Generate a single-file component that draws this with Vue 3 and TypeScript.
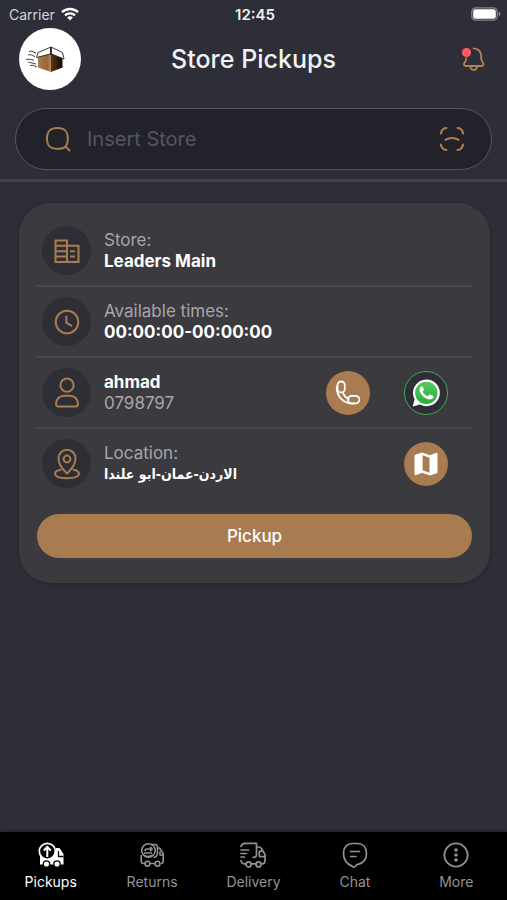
<script setup lang="ts">
import { ref } from 'vue'

interface Tab {
  id: string
  label: string
}

const tabs: Tab[] = [
  { id: 'pickups', label: 'Pickups' },
  { id: 'returns', label: 'Returns' },
  { id: 'delivery', label: 'Delivery' },
  { id: 'chat', label: 'Chat' },
  { id: 'more', label: 'More' },
]

const activeTab = ref('pickups')
const query = ref('')

const store = {
  name: 'Leaders Main',
  times: '00:00:00-00:00:00',
  contact: 'ahmad',
  phone: '0798797',
  location: 'الاردن-عمان-ابو علندا',
}
</script>

<template>
  <div class="screen">
    <div class="status">
      <div class="carrier">
        <span>Carrier</span>
        <svg class="wifi" viewBox="0 0 18 14" aria-hidden="true">
          <g fill="none" stroke="currentColor" stroke-width="2.4">
            <path d="M1 5.2a11.5 11.5 0 0 1 16 0" />
            <path d="M4 8.400a7.2 7.2 0 0 1 10 0" />
          </g>
          <path d="M9 13.600 6.100 10.600a4.2 4.2 0 0 1 5.800 0z" fill="currentColor" />
        </svg>
      </div>
      <span class="clock">12:45</span>
      <svg class="battery" viewBox="0 0 30 14" aria-hidden="true">
        <rect x=".8" y=".8" width="25.4" height="12.4" rx="4" fill="none" stroke="#85858b" stroke-width="1.3" />
        <rect x="2.2" y="2.2" width="22.6" height="9.6" rx="2.4" fill="#fff" />
        <path d="M27.6 4.8q2 .8 2 2.2t-2 2.2z" fill="#85858b" />
      </svg>
    </div>

    <header class="header">
      <div class="logo">
        <svg viewBox="0 0 62 62" aria-hidden="true">
          <defs>
            <linearGradient id="box-left" x1="0" x2="1">
              <stop offset="0" stop-color="#ad7c4b" />
              <stop offset=".7" stop-color="#96663a" />
              <stop offset="1" stop-color="#b98b5c" />
            </linearGradient>
            <linearGradient id="box-right" x1="0" x2="1">
              <stop offset="0" stop-color="#5b3419" />
              <stop offset="1" stop-color="#120b0a" />
            </linearGradient>
          </defs>
          <path d="M19 28.500 32 25.500V44L19 39.500z" fill="url(#box-left)" />
          <path d="M32 25.500 43.500 28.500V39.500L32 44z" fill="url(#box-right)" />
          <path d="M19 24.500 32 19V25.800L17.500 29.500z" fill="#fff" stroke="#29211f" stroke-width=".9" />
          <path d="M32 19 43.500 24.500 45 31 32 25.800z" fill="#fff" stroke="#29211f" stroke-width=".9" />
          <path d="M32 19v8" stroke="#29211f" stroke-width="1.600" />
          <path d="M10 23.500l3-.3 4 2M9 27l3-.3 4 2M7 31.500l3-.3 5 1M9 34l8 2M11 37.500l3-.3 4 2" fill="none" stroke="#333" stroke-width=".9" />
        </svg>
      </div>
      <h1>Store Pickups</h1>
      <button class="bell" type="button" aria-label="Notifications">
        <svg viewBox="0 0 26 28" aria-hidden="true">
          <g fill="none" stroke="#b08350" stroke-width="1.800" stroke-linecap="round" stroke-linejoin="round">
            <path d="M13.500 3.300c4.500.1 7.700 3.300 7.700 7.500v3.300c0 1.700 2.200 3.600 2.200 5.200 0 1-.8 1.700-1.900 1.700H6c-1.200 0-2-.7-2-1.700 0-1.600 2.200-3.400 2.200-5.200v-1" />
            <path d="M10 21.200c.5 2.400 1.800 3.700 3.700 3.700s3.200-1.300 3.700-3.700" />
          </g>
          <circle cx="6.500" cy="7.500" r="4.600" fill="#fc5a62" />
        </svg>
      </button>
    </header>

    <div class="search-area">
      <form class="search" role="search" @submit.prevent>
        <svg class="glass" viewBox="0 0 26 26" aria-hidden="true">
          <g fill="none" stroke="#a97d4e" stroke-width="2" stroke-linecap="round">
            <path d="M12.500 2C20 2 22.800 5 22.800 12.500S20 22.800 12.500 22.800 2 20 2 12.500 5 2 12.500 2z" />
            <path d="M20.500 20.500 24.500 24.500" />
          </g>
        </svg>
        <input v-model="query" type="text" placeholder="Insert Store" aria-label="Insert Store" />
        <button class="scan" type="button" aria-label="Scan">
          <svg viewBox="0 0 26 26" aria-hidden="true">
            <g fill="none" stroke="#a97d4e" stroke-width="2.200" stroke-linecap="round">
              <path d="M2 7.500C2.300 4 4 2.300 7.500 2M18.500 2C22 2.300 23.700 4 24 7.500M24 18.500c-.3 3.500-2 5.200-5.500 5.500M7.500 24C4 23.700 2.300 22 2 18.500" />
              <path d="M6.500 13.800c4-2.200 9-2.200 13 0" />
            </g>
          </svg>
        </button>
      </form>
    </div>

    <main class="content">
      <section class="card">
        <div class="row">
          <span class="badge">
            <svg viewBox="0 0 28 28" fill="none" stroke="#a97d4e" stroke-width="2" aria-hidden="true">
              <path d="M2.500 3.500h11.500V25H2.500zM14 8.800h11.500V25H14" />
              <path d="M2.500 8.800H14M2.500 14.200H14M2.500 19.600H14" />
              <path d="M17 14.200h5M17 19.600h5" />
            </svg>
          </span>
          <div class="text">
            <span class="label">Store:</span>
            <span class="value">{{ store.name }}</span>
          </div>
        </div>

        <div class="row">
          <span class="badge">
            <svg viewBox="0 0 28 28" fill="none" stroke="#a97d4e" stroke-width="2" stroke-linecap="round" stroke-linejoin="round" aria-hidden="true">
              <circle cx="14" cy="14" r="11.300" />
              <path d="M13.300 8.500v6.200l5 3" />
            </svg>
          </span>
          <div class="text">
            <span class="label">Available times:</span>
            <span class="value">{{ store.times }}</span>
          </div>
        </div>

        <div class="row">
          <span class="badge">
            <svg class="tall" viewBox="0 0 28 32" fill="none" stroke="#a97d4e" stroke-width="2" stroke-linejoin="round" aria-hidden="true">
              <circle cx="14" cy="8.200" r="6.600" />
              <path d="M3 27c0-5 3.500-8.300 8-8.300h6c4.500 0 8 3.300 8 8.300 0 1.500-1 2.600-2.500 2.600h-17C4 29.600 3 28.500 3 27z" />
            </svg>
          </span>
          <div class="text">
            <span class="value">{{ store.contact }}</span>
            <span class="label">{{ store.phone }}</span>
          </div>
          <div class="actions">
            <a class="round" :href="'tel:' + store.phone" aria-label="Call">
              <svg viewBox="0 0 28 28" fill="none" stroke="#fff" stroke-width="1.800" stroke-linecap="round" aria-hidden="true">
                <rect x="3.500" y="2.500" width="7.300" height="11" rx="3.600" />
                <rect x="14" y="16.800" width="11.300" height="7.600" rx="3.700" />
                <path d="M2.700 8C2.700 18 9.500 24.900 20 24.600M8.800 13.300c.9 3 3 5.500 5.900 6.700" />
              </svg>
            </a>
            <a class="round whatsapp" href="#whatsapp" aria-label="WhatsApp">
              <svg viewBox="0 0 28 28" aria-hidden="true">
                <defs>
                  <linearGradient id="wa" x1="0" y1="0" x2="0" y2="1">
                    <stop offset="0" stop-color="#55cb62" />
                    <stop offset="1" stop-color="#28ad3a" />
                  </linearGradient>
                </defs>
                <path d="M14.300.6A13.300 13.300 0 0 0 2.600 20.200L.6 27.500l7.600-1.900A13.300 13.300 0 1 0 14.300.6z" fill="#fff" />
                <circle cx="14.300" cy="13.900" r="11.200" fill="url(#wa)" />
                <path d="M9.700 7.200c-1 .4-2.200 1.700-2.200 3.400 0 4.500 5.700 9.900 10.400 9.900 1.800 0 3.400-1.100 3.600-2.500.1-.7 0-1-.5-1.200l-2.800-1.300c-.4-.2-.7-.1-1 .3l-1.100 1.300c-.3.300-.5.300-.9.100-2-1-3.500-2.300-4.500-4.100-.2-.4-.1-.6.200-.9l.8-1c.2-.3.200-.6.100-.9l-1.200-2.700c-.2-.4-.5-.5-.9-.4z" fill="#fff" />
              </svg>
            </a>
          </div>
        </div>

        <div class="row">
          <span class="badge">
            <svg class="tall" viewBox="0 0 28 32" fill="none" stroke="#a97d4e" stroke-width="2" stroke-linecap="round" aria-hidden="true">
              <path d="M14 25.500C8.500 20.500 5.500 15.500 5.500 10.500a8.500 8.800 0 0 1 17 0C22.500 15.500 19.500 20.500 14 25.500z" />
              <circle cx="14" cy="11" r="3.400" />
              <path d="M7.500 21.800C4 22.600 2 24 2 25.800c0 2.700 4.800 4.400 12 4.400s12-1.700 12-4.400c0-1.800-2-3.200-5.500-4" />
            </svg>
          </span>
          <div class="text">
            <span class="label">Location:</span>
            <span class="value arabic" lang="ar" dir="rtl">{{ store.location }}</span>
          </div>
          <div class="actions">
            <button class="round" type="button" aria-label="Open map">
              <svg viewBox="0 0 28 28" aria-hidden="true">
                <path d="M10 2.500 3.300 4.800c-.5.200-.8.500-.8 1V24.300c0 .8.500 1.100 1.200.9L10 22.800l8 2.700 6.700-2.300c.5-.2.800-.5.800-1V3.700c0-.8-.5-1.100-1.200-.9L18 5.300zM10.600 5.300 17.500 7.700V22.700L10.600 20.300z" fill="#fff" fill-rule="evenodd" />
              </svg>
            </button>
          </div>
        </div>

        <button class="pickup" type="button">Pickup</button>
      </section>
    </main>

    <nav class="tabs">
      <button
        v-for="tab in tabs"
        :key="tab.id"
        class="tab"
        :class="{ active: tab.id === activeTab }"
        type="button"
        @click="activeTab = tab.id"
      >
        <svg v-if="tab.id === 'pickups'" viewBox="0 0 26 26" aria-hidden="true">
          <path d="M2 10h16V6h3.500l4 6v10.500H2z" fill="currentColor" />
          <circle cx="9.300" cy="9.300" r="8" fill="#000" stroke="currentColor" stroke-width="1.700" />
          <path d="M9.300 15V5M5.800 8.500 9.300 5l3.500 3.500" fill="none" stroke="currentColor" stroke-width="2" />
          <path d="M20.500 9v5.500h5" fill="none" stroke="#000" stroke-width="1.300" />
          <g fill="currentColor" stroke="#000" stroke-width="1.300">
            <circle cx="8.500" cy="22" r="3.200" />
            <circle cx="19" cy="22" r="3.200" />
          </g>
        </svg>
        <svg v-else-if="tab.id === 'returns'" viewBox="0 0 26 26" fill="none" stroke="currentColor" stroke-width="1.600" stroke-linejoin="round" aria-hidden="true">
          <circle cx="9.500" cy="8.500" r="6.800" />
          <path d="M12.500 2.500H16c2 0 2.500 1 2.500 3v5c0 3-1 4.500-4 5M2.200 13v6.500c0 1.300 1 2 2.500 2H6M18.500 6h2l3.700 5.500v8c0 1.300-1 2-2.300 2M11 21.500h5.500M21 9.500v3.500h3" />
          <path d="M13 7H8C6.500 7 6 8 6 9M11 4.800 13.200 7 11 9.200M3.500 12c3 2.800 7 3 10.500 1M5 11h8" />
          <circle cx="8.500" cy="21.700" r="2.400" />
          <circle cx="18.500" cy="21.700" r="2.400" />
        </svg>
        <svg v-else-if="tab.id === 'delivery'" viewBox="0 0 26 26" fill="none" stroke="currentColor" stroke-width="1.700" stroke-linecap="round" stroke-linejoin="round" aria-hidden="true">
          <path d="M1 4.500C1.500 2 2.500 1.300 5 1.300h11.500v11.200c0 1.700-.8 2.800-2.500 2.800h-1M16.500 5h2.300c1.300 0 2 .5 2.600 1.500l3.600 6V19c0 1.800-1 2.800-3 2.800M21.300 9.200h-1c-.7 0-1 .4-1 1v3.500c0 .7.300 1 1 1h4.700M11.500 21.800h4.200M5.800 21.800H4.500c-2 0-3.300-1-3.500-3.300M1 8h7.500M1 11.500h5.500M1 15h3.500" />
          <circle cx="8.600" cy="22.400" r="2.500" />
          <circle cx="18.600" cy="22.400" r="2.500" />
        </svg>
        <svg v-else-if="tab.id === 'chat'" viewBox="0 0 26 26" fill="none" stroke="currentColor" stroke-width="1.700" stroke-linecap="round" stroke-linejoin="round" aria-hidden="true">
          <path d="M10.500 1.500H15c6 0 9.500 3.800 9.500 9.800 0 6.300-3.500 10-8.500 11-1 .2-1.500.5-2 1.200-1.500 2-2.700 2-4 .6C5 22 1.500 18 1.500 11.300c0-6 3.500-9.800 9-9.800z" />
          <path d="M8.500 9.500h9M8.500 14.500h5.500" />
        </svg>
        <svg v-else viewBox="0 0 26 26" aria-hidden="true">
          <circle cx="13" cy="13" r="11.600" fill="none" stroke="currentColor" stroke-width="1.800" />
          <g fill="currentColor">
            <circle cx="13" cy="8" r="1.800" />
            <circle cx="13" cy="13" r="1.800" />
            <circle cx="13" cy="18" r="1.800" />
          </g>
        </svg>
        <span>{{ tab.label }}</span>
      </button>
    </nav>
  </div>
</template>

<style>
body {
  background: #2e2e38;
}
</style>

<style scoped>
.screen {
  display: flex;
  flex-direction: column;
  min-height: 100vh;
  background: #2e2e38;
  color: #f2f2f5;
  font-family: Inter, "Liberation Sans", "DejaVu Sans", sans-serif;
  font-size: 17px;
}

button {
  padding: 0;
  border: 0;
  background: none;
  color: inherit;
  font: inherit;
  cursor: pointer;
}

svg {
  display: block;
}

.status {
  display: grid;
  grid-template-columns: 1fr auto 1fr;
  align-items: center;
  height: 28px;
  padding: 0 6px 0 9px;
  font-size: 14px;
}

.carrier {
  display: flex;
  align-items: center;
  gap: 6px;
  color: #d5d5da;
}

.wifi {
  width: 18px;
  height: 14px;
  color: #fff;
}

.clock {
  font-size: 15px;
  font-weight: 600;
}

.battery {
  justify-self: end;
  width: 30px;
  height: 14px;
}

.header {
  display: grid;
  grid-template-columns: 62px 1fr 62px;
  align-items: center;
  padding: 0 19px;
}

.logo {
  width: 62px;
  height: 62px;
  border-radius: 50%;
  background: #fff;
}

h1 {
  margin: 0;
  font-size: 25px;
  font-weight: 500;
  text-align: center;
}

.bell {
  justify-self: end;
  margin-right: 2px;
}

.bell svg {
  width: 26px;
  height: 28px;
}

.search-area {
  padding: 18px 15px 9px;
  border-bottom: 3px solid #42424a;
}

.search {
  display: flex;
  align-items: center;
  gap: 16px;
  height: 60px;
  padding: 0 26px 0 29px;
  border: 1px solid #56565d;
  border-radius: 31px;
  background: #22222a;
}

.glass,
.scan svg {
  width: 26px;
  height: 26px;
}

.search input {
  flex: 1;
  min-width: 0;
  padding: 0;
  border: 0;
  outline: 0;
  background: none;
  color: #f2f2f5;
  font: inherit;
  font-size: 20px;
}

.search input::placeholder {
  color: #56565e;
  opacity: 1;
}

.content {
  flex: 1;
  padding: 21px 17px 21px 19px;
}

.card {
  padding: 13px 18px 25px;
  border-radius: 32px;
  background: #3a3a3f;
  box-shadow: 0 1px 4px rgba(0, 0, 0, 0.2);
}

.row {
  display: flex;
  align-items: center;
  gap: 13px;
  height: 69px;
  padding: 0 24px 0 5px;
  border-bottom: 2px solid #48484e;
}

.row:nth-child(4) {
  border-bottom-color: transparent;
}

.badge {
  display: grid;
  place-items: center;
  width: 49px;
  height: 49px;
  border-radius: 50%;
  background: #2e2e37;
}

.badge svg {
  width: 28px;
  height: 28px;
}

.badge .tall {
  height: 32px;
}

.text {
  display: flex;
  flex: 1;
  flex-direction: column;
  align-items: flex-start;
  line-height: 21px;
}

.label {
  color: #a6a6ab;
}

.value {
  color: #fff;
  font-weight: 700;
}

.arabic {
  font-family: "DejaVu Sans Condensed", "DejaVu Sans", sans-serif;
  font-size: 14px;
}

.actions {
  display: flex;
  gap: 34px;
}

.round {
  display: grid;
  place-items: center;
  box-sizing: border-box;
  width: 44px;
  height: 44px;
  border-radius: 50%;
  background: #a87c50;
}

.round svg {
  width: 28px;
  height: 28px;
}

.whatsapp {
  border: 1px solid #43a855;
  background: #2e2e37;
}

.pickup {
  display: block;
  width: 100%;
  height: 44px;
  margin-top: 14px;
  border-radius: 22px;
  background: #a87c50;
  color: #fff;
  font-weight: 500;
}

.tabs {
  display: grid;
  grid-template-columns: repeat(5, 1fr);
  height: 68px;
  background: #000;
  box-shadow: 0 -1px 3px rgba(0, 0, 0, 0.3);
}

.tab {
  display: flex;
  flex-direction: column;
  align-items: center;
  gap: 5px;
  padding-top: 10px;
  color: #929292;
  font-size: 14px;
}

.tab svg {
  width: 26px;
  height: 26px;
}

.tab.active {
  color: #fff;
}
</style>
